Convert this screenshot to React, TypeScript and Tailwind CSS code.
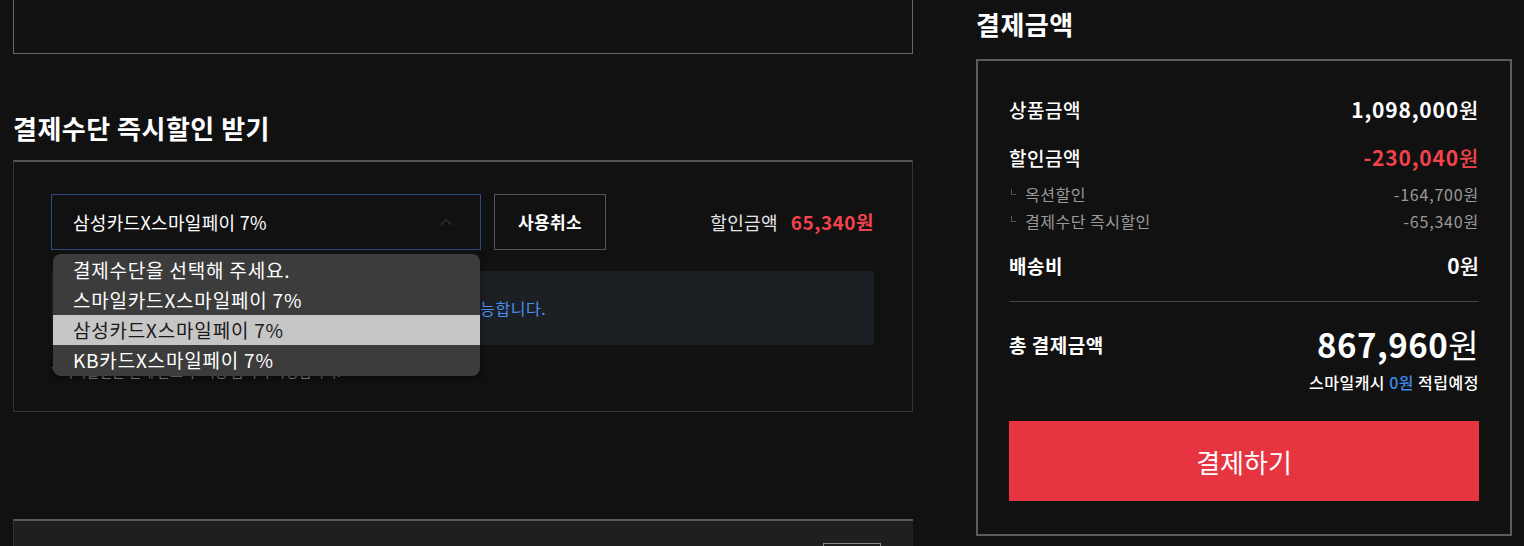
import { ChevronUp } from "lucide-react";

const font = { fontFamily: '"Noto Sans CJK KR", "Noto Sans", sans-serif' };

const options = [
  "결제수단을 선택해 주세요.",
  "스마일카드X스마일페이 7%",
  "삼성카드X스마일페이 7%",
  "KB카드X스마일페이 7%",
];

function SubRow({ label, value }: { label: string; value: string }) {
  return (
    <div className="flex h-[27px] items-center justify-between text-[16px] text-[#9a9a9a]">
      <div className="flex items-center gap-[9px]">
        <span className="mb-[4px] ml-[2px] h-[6px] w-[5px] border-b border-l border-[#555]" />
        <span className="tracking-[0.5px]">{label}</span>
      </div>
      <span className="tracking-[0.8px]">{value}</span>
    </div>
  );
}

export default function App() {
  return (
    <div className="h-[546px] w-[1524px] overflow-hidden bg-[#111111] text-white" style={font}>
      <div className="flex pl-[13px]">
        {/* left column */}
        <div className="w-[900px]">
          <div className="h-[54px] border-x border-b border-[#666]" />

          <h2 className="mt-[58px] text-[26px] font-bold leading-[32px] tracking-[0.5px]">
            결제수단 즉시할인 받기
          </h2>

          <div className="mt-[16px] h-[252px] border-x border-b border-t-2 border-x-[#333] border-b-[#333] border-t-[#555] pl-[37px] pr-[38px] pt-[32px]">
            <div className="relative flex h-[56px] items-center">
              <div className="flex h-[56px] w-[430px] items-center justify-between border border-[#2e4a7d] pl-[21px] pr-[24px]">
                <span className="text-[18px] tracking-[0.3px]">삼성카드X스마일페이 7%</span>
                <ChevronUp className="h-[20px] w-[20px] text-[#2c2c2c]" strokeWidth={2} />
              </div>
              <button className="ml-[13px] h-[56px] w-[112px] border border-[#555] text-[17px] font-bold tracking-[0.3px]">
                사용취소
              </button>
              <div className="ml-auto flex items-center gap-[13px]">
                <span className="text-[18px] tracking-[0.3px] text-[#e6e6e6]">할인금액</span>
                <span className="text-[19px] font-bold tracking-[0.5px] text-[#f0434b]">65,340원</span>
              </div>

              {/* dropdown list */}
              <div className="absolute left-[2px] top-[60px] z-10 w-[427px] overflow-hidden rounded-[8px] bg-[#3c3c3c] py-px shadow-[0_2px_6px_rgba(0,0,0,0.5)]">
                {options.map((o, i) => (
                  <div
                    key={o}
                    className={
                      i === 2
                        ? "flex h-[30px] items-center bg-[#c6c6c6] pl-[20px] text-[19px] tracking-[0.8px] text-[#1a1a1a]"
                        : "flex h-[30px] items-center pl-[20px] text-[19px] tracking-[0.8px] text-white"
                    }
                  >
                    {o}
                  </div>
                ))}
              </div>
            </div>

            <div className="mt-[21px] flex h-[74px] items-center bg-[#1c1f24] px-[22px] text-[16px] tracking-[0.5px] text-[#4a8ff0]">
              결제수단 즉시할인은 스마일페이 결제 시 주문당 1회 적용 가능합니다.
            </div>

            <p className="mt-[16px] text-[14px] leading-[20px] text-[#8a8a8a]">
              * 즉시할인은 결제 완료 후 적용 금액이 확정됩니다.
            </p>
          </div>

          <div className="mt-[107px] h-[40px] border-l border-t-2 border-l-[#333] border-t-[#5a5a5a] bg-[#1f1f1f] pl-[809px] pt-[22px]">
            <div className="h-[20px] w-[58px] border border-[#888]" />
          </div>
        </div>

        {/* right column */}
        <div className="ml-[63px] w-[536px]">
          <h2 className="mt-[8px] text-[26px] font-bold leading-[32px] tracking-[0.5px]">결제금액</h2>

          <div className="mt-[19px] border-2 border-[#5c5c5c] px-[31px] pb-[33px] pt-[35px]">
            <div className="flex h-[28px] items-center justify-between">
              <span className="text-[19px] font-medium tracking-[0.5px]">상품금액</span>
              <span className="text-[21px] font-bold tracking-[0.8px]">
                1,098,000<span className="font-medium">원</span>
              </span>
            </div>

            <div className="mt-[20px] flex h-[28px] items-center justify-between">
              <span className="text-[19px] font-medium tracking-[0.5px]">할인금액</span>
              <span className="text-[21px] font-bold tracking-[0.8px] text-[#f0434b]">
                -230,040<span className="font-medium">원</span>
              </span>
            </div>

            <div className="mt-[8px]">
              <SubRow label="옥션할인" value="-164,700원" />
              <SubRow label="결제수단 즉시할인" value="-65,340원" />
            </div>

            <div className="mt-[18px] flex h-[28px] items-center justify-between">
              <span className="text-[19px] font-bold tracking-[0.5px]">배송비</span>
              <span className="text-[21px] font-bold">
                0<span className="font-medium">원</span>
              </span>
            </div>

            <div className="mt-[21px] h-px bg-[#444]" />

            <div className="mt-[22px] flex h-[40px] items-start justify-between">
              <span className="mt-[9px] text-[19px] font-bold leading-[24px] tracking-[0.5px]">총 결제금액</span>
              <span className="text-[33px] font-bold leading-[40px] tracking-[0.5px]">
                867,960<span className="font-normal">원</span>
              </span>
            </div>

            <div className="mt-[8px] flex h-[20px] items-center justify-end text-[16px] font-medium tracking-[0.5px]">
              스마일캐시&nbsp;<span className="text-[#3d8ae8]">0원</span>&nbsp;적립예정
            </div>

            <button className="mt-[29px] flex h-[80px] w-full items-center justify-center bg-[#e63540] text-[26px] text-white">
              결제하기
            </button>
          </div>
        </div>
      </div>
    </div>
  );
}
